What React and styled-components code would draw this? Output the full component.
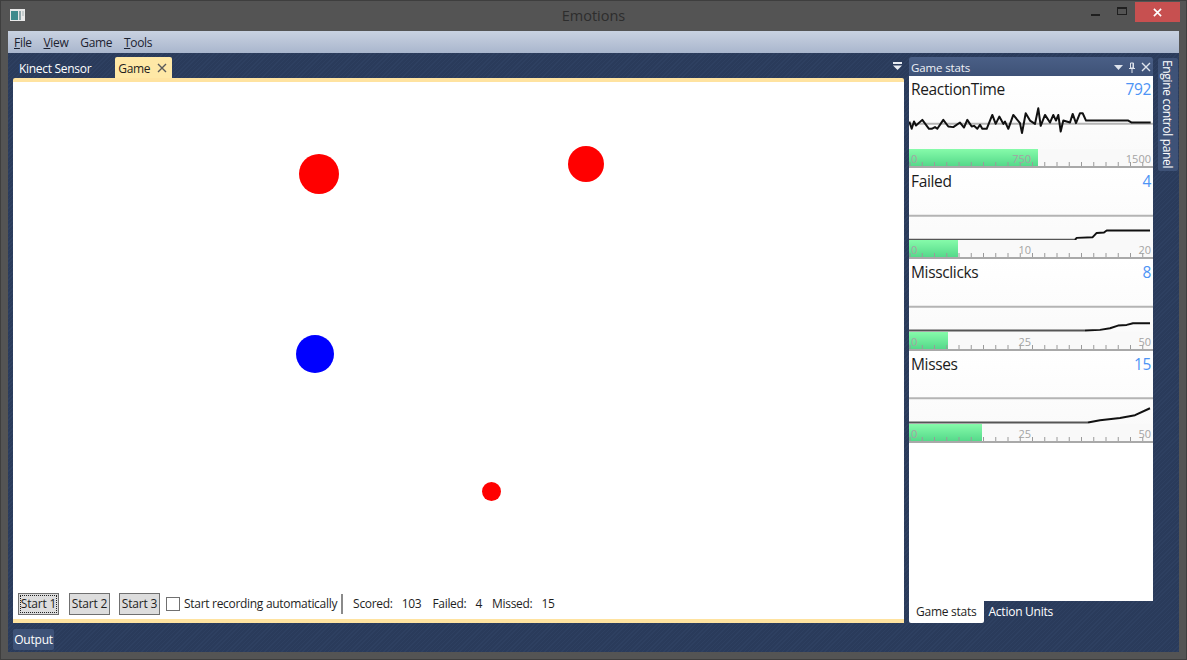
import React from 'react'
import styled, { createGlobalStyle } from 'styled-components'

const UI_FONT = `"Open Sans", "Noto Sans", sans-serif`

const GlobalStyle = createGlobalStyle`
  html, body { margin: 0; padding: 0; background: #545454; }
  body { font-family: ${UI_FONT}; font-size: 12px; color: #1e1e1e; }
  * { box-sizing: border-box; }
`

const Win = styled.div`
  width: 1187px;
  height: 660px;
  display: flex;
  flex-direction: column;
  background: #545454;
  border: 1px solid #3e3e3e;
  overflow: hidden;
`

const TitleBar = styled.header`
  height: 30px;
  flex: none;
  position: relative;
  display: flex;
  align-items: flex-start;
  justify-content: center;
`

const AppIcon = styled.svg`
  position: absolute;
  left: 9px;
  top: 8px;
`

const WinTitle = styled.div`
  font-size: 14.5px;
  line-height: 30px;
  color: #2d2d2d;
`

const WinButtons = styled.div`
  position: absolute;
  top: 1px;
  right: 6px;
  display: flex;
  align-items: flex-start;
`

const WinButton = styled.div`
  width: ${p => p.$w}px;
  height: 20px;
  display: flex;
  align-items: center;
  justify-content: center;
  padding-bottom: ${p => p.$lift || 0}px;
  background: ${p => p.$danger ? '#c75050' : 'transparent'};
`

const Client = styled.div`
  flex: 1;
  margin: 0 7px 7px;
  display: flex;
  flex-direction: column;
  min-height: 0;
  background-color: #2b3c5c;
  background-image: repeating-linear-gradient(135deg, #2a3b5b 0 2px, #2e4061 2px 3px);
`

const MenuBar = styled.nav`
  height: 22px;
  flex: none;
  display: flex;
  align-items: center;
  gap: 11.7px;
  padding-left: 6px;
  background: linear-gradient(#c9d2e1, #a9b6cd);
`

const MenuItem = styled.span`
  font-size: 12px;
  color: #1c2230;
  letter-spacing: -0.3px;
`

const Workspace = styled.div`
  flex: 1;
  min-height: 0;
  display: flex;
  padding: 4px 0 0 5px;
  gap: 5px;
`

const DocPane = styled.section`
  width: 891px;
  flex: none;
  display: flex;
  flex-direction: column;
`

const TabStrip = styled.div`
  height: 21px;
  flex: none;
  display: flex;
  align-items: stretch;
  position: relative;
`

const DocTab = styled.div`
  display: flex;
  align-items: center;
  gap: 7px;
  padding: 1px ${p => p.$active ? '5px' : '6px'} 0 ${p => p.$active ? '3px' : '6px'};
  margin-right: ${p => p.$active ? 0 : '18px'};
  border-radius: 2px 2px 0 0;
  font-size: 12px;
  letter-spacing: -0.3px;
  color: ${p => p.$active ? '#1e1e1e' : '#fff'};
  background: ${p => p.$active ? '#ffe8a6' : 'transparent'};
`

const OverflowIcon = styled.svg`
  position: absolute;
  right: 2px;
  top: 5px;
`

const DocBody = styled.div`
  flex: 1;
  display: flex;
  flex-direction: column;
  background: #fff;
  border-top: 4px solid #ffe3a0;
  border-bottom: 4px solid #ffe3a0;
  border-radius: 2px 2px 0 0;
`

const GameCanvas = styled.div`
  flex: 1;
  position: relative;
`

const Ball = styled.div`
  position: absolute;
  left: ${p => p.$x - p.$size / 2}px;
  top: ${p => p.$y - p.$size / 2}px;
  width: ${p => p.$size}px;
  height: ${p => p.$size}px;
  border-radius: 50%;
  background: ${p => p.$color};
`

const Toolbar = styled.div`
  height: 26px;
  flex: none;
  display: flex;
  align-items: center;
  padding: 0 0 5px 5px;
  font-size: 12px;
  letter-spacing: -0.3px;
`

const StartButton = styled.button`
  width: 41px;
  height: 22px;
  margin-right: ${p => p.$gap}px;
  padding: 0;
  font: inherit;
  color: #1e1e1e;
  letter-spacing: -0.2px;
  background: #dddddd;
  border: 1px solid #707070;
  outline: ${p => p.$focused ? '1px dotted #222' : 'none'};
  outline-offset: -3px;
`

const CheckBox = styled.span`
  width: 14px;
  height: 14px;
  margin-right: 4px;
  background: #fff;
  border: 1px solid #707070;
`

const Separator = styled.span`
  width: 2px;
  height: 20px;
  margin: 0 10px 0 4px;
  background: #8a8a8a;
`

const Stat = styled.span`
  margin-right: ${p => p.$gap}px;
  white-space: nowrap;
`

const SidePane = styled.aside`
  width: 244px;
  flex: none;
  display: flex;
  flex-direction: column;
  height: 566px;
`

const PaneHeader = styled.div`
  height: 19px;
  flex: none;
  display: flex;
  align-items: center;
  justify-content: space-between;
  padding: 1px 2px 0 2px;
  border-radius: 3px 3px 0 0;
  background: linear-gradient(#4a5f86, #3e5277);
  color: #eef1f6;
  font-size: 11.5px;
  letter-spacing: -0.13px;
`

const HeaderIcons = styled.div`
  display: flex;
  align-items: center;
  gap: 5px;
`

const StatsList = styled.div`
  flex: 1;
  background: #fff;
`

const StatRow = styled.div`
  height: 91.67px;
  display: flex;
  flex-direction: column;
  background: linear-gradient(#ffffff, #f9f9f9);
`

const StatHead = styled.div`
  height: 27px;
  flex: none;
  display: flex;
  justify-content: space-between;
  padding: 2px 2px 0 2px;
  font-size: 15.5px;
  line-height: 22px;
  letter-spacing: -0.35px;
  color: #1b1b1b;
`

const StatValue = styled.span`
  color: #4d94f5;
`

const Plot = styled.svg`
  flex: 1;
  display: block;
  width: 244px;
  min-height: 0;
`

const Gauge = styled.div`
  height: 19px;
  flex: none;
  position: relative;
  background: #f9f9f9;
  border-bottom: 2px solid #a9a9a9;
`

const GaugeFill = styled.div`
  height: 100%;
  background: linear-gradient(#86fbaa, #55d98a);
`

const GaugeTicks = styled.svg`
  position: absolute;
  left: 0;
  bottom: 0;
`

const GaugeLabels = styled.div`
  position: absolute;
  inset: 2px 2px 0 2px;
  display: grid;
  grid-template-columns: 1fr 1fr;
  font-size: 11px;
  line-height: 15px;
  color: #a3a3a3;
`

const GaugeHalf = styled.div`
  display: flex;
  justify-content: space-between;
`

const GaugeEnd = styled.div`
  text-align: right;
`

const PaneTabs = styled.div`
  height: 22px;
  flex: none;
  display: flex;
  font-size: 12px;
  letter-spacing: -0.25px;
`

const PaneTab = styled.div`
  display: flex;
  align-items: center;
  padding: 0 ${p => p.$active ? '7px' : '5px'} 2px;
  border-radius: 0 0 2px 2px;
  color: ${p => p.$active ? '#1e1e1e' : '#fff'};
  background: ${p => p.$active ? '#fff' : 'transparent'};
`

const SideRail = styled.div`
  flex: none;
  padding-top: 1px;
`

const RailTab = styled.div`
  width: 20px;
  height: 113px;
  writing-mode: vertical-rl;
  white-space: nowrap;
  display: flex;
  align-items: center;
  padding: 2px 2px 0 0;
  border-radius: 2px;
  background: #3e5277;
  color: #fff;
  font-size: 12px;
  letter-spacing: -0.33px;
`

const BottomStrip = styled.div`
  height: 29px;
  flex: none;
  padding: 6px 0 2px 5px;
`

const OutputTab = styled.div`
  width: 41px;
  height: 21px;
  display: flex;
  align-items: center;
  justify-content: center;
  border-radius: 2px;
  background: #3e5277;
  color: #fff;
  font-size: 12px;
  letter-spacing: -0.2px;
`

const toPolyline = (pts, top) => pts.map(([x, y]) => `${x - 909},${y - top}`).join(' ')

const reactionLine = [
  [909.3, 121.7], [911.7, 129], [914, 121.7], [916, 125.7], [922.3, 120], [929, 129], [931.7, 129],
  [935, 127.3], [937.3, 129], [943.3, 120], [948.3, 126.7], [953.3, 127.3], [960, 122.7], [964, 127.7],
  [967.3, 120], [971.7, 126.7], [974, 126], [977.3, 129], [980, 125], [982.3, 129], [986.7, 129],
  [992.3, 115], [995.7, 124], [999.3, 116.7], [1003.3, 124], [1005, 121.7], [1008.3, 129], [1013.3, 115],
  [1020, 123.3], [1022, 133.3], [1025.7, 113.3], [1030, 120.7], [1035, 124], [1038.3, 108.3], [1040.7, 126],
  [1045, 115], [1050, 122.7], [1053.3, 115], [1056, 120.7], [1058.3, 115], [1060.7, 131.7], [1063.3, 120.7],
  [1070, 122.7], [1072.7, 114], [1076, 123.3], [1080, 113.3], [1082.7, 113.3], [1086, 120.7], [1128.3, 120.7],
  [1131.7, 122.7], [1150.7, 122.7],
]

// screen y of each plot's top is kept in `top`, so the traced points stay readable
const rows = [
  {
    title: 'ReactionTime', value: '792', top: 103, guide: 21, fill: 129,
    labels: ['0', '750', '1500'], line: reactionLine,
  },
  {
    title: 'Failed', value: '4', top: 194.5, guide: 21, fill: 49, flat: [239.7, 1075],
    labels: ['0', '10', '20'],
    line: [[1075, 239.7], [1076.7, 237.7], [1092.7, 237], [1096.7, 232.7], [1104, 232.3], [1106.7, 230.3], [1150, 230.3]],
  },
  {
    title: 'Missclicks', value: '8', top: 285.8, guide: 21, fill: 39, flat: [330.7, 1085],
    labels: ['0', '25', '50'],
    line: [[1085, 330.7], [1100, 330], [1110, 328.3], [1118, 325.7], [1126.7, 325], [1133, 323.3], [1150, 323.3]],
  },
  {
    title: 'Misses', value: '15', top: 377.5, guide: 20.5, fill: 73, flat: [422.3, 1088],
    labels: ['0', '25', '50'],
    line: [[1088, 422.3], [1100, 420], [1120, 417.7], [1135, 415], [1150, 408]],
  },
]

const ticks = Array.from({ length: 20 }, (_, i) => 1 + i * 12.25)

const StatBlock = ({ row }) => (
  <StatRow>
    <StatHead>
      <span>{row.title}</span>
      <StatValue>{row.value}</StatValue>
    </StatHead>
    <Plot viewBox="0 0 244 46" preserveAspectRatio="none">
      <line x1="0" x2="244" y1={row.guide} y2={row.guide} stroke="#b4b4b4" strokeWidth="2" />
      {row.flat && (
        <line x1="0" x2={row.flat[1] - 909} y1={row.flat[0] - row.top} y2={row.flat[0] - row.top} stroke="#555" strokeWidth="2" />
      )}
      <polyline points={toPolyline(row.line, row.top)} fill="none" stroke="#111" strokeWidth="2" strokeLinejoin="round" />
    </Plot>
    <Gauge>
      <GaugeFill style={{ width: row.fill }} />
      <GaugeTicks width="244" height="5">
        {ticks.map(x => <line key={x} x1={x} x2={x} y1="1" y2="5" stroke="#9a9a9a" />)}
      </GaugeTicks>
      <GaugeLabels>
        <GaugeHalf>
          <span>{row.labels[0]}</span>
          <span>{row.labels[1]}</span>
        </GaugeHalf>
        <GaugeEnd>{row.labels[2]}</GaugeEnd>
      </GaugeLabels>
    </Gauge>
  </StatRow>
)

const CloseGlyph = ({ size, color, width = 1.4 }) => (
  <svg width={size} height={size} viewBox="0 0 10 10">
    <path d="M1 1 9 9M9 1 1 9" stroke={color} strokeWidth={width} fill="none" />
  </svg>
)

export default function App() {
  return (
    <>
      <GlobalStyle />
      <Win>
        <TitleBar>
          <AppIcon width="15" height="12" viewBox="0 0 15 12">
            <rect width="15" height="12" fill="#e8e8e8" />
            <rect x="1" y="2" width="7" height="9" fill="#3f8a8c" />
            <rect x="9" y="2" width="2" height="9" fill="#8fa4a8" />
            <rect x="12" y="2" width="2" height="5" fill="#c4cccc" />
          </AppIcon>
          <WinTitle>Emotions</WinTitle>
          <WinButtons>
            <WinButton $w={28}>
              <svg width="9" height="10" viewBox="0 0 9 10"><rect y="7" width="9" height="2" fill="#1f1f1f" /></svg>
            </WinButton>
            <WinButton $w={26} $lift={3}>
              <svg width="10" height="8" viewBox="0 0 10 8">
                <rect x="0.5" y="0.5" width="9" height="7" fill="none" stroke="#1f1f1f" />
                <rect x="0" y="0" width="10" height="2" fill="#1f1f1f" />
              </svg>
            </WinButton>
            <WinButton $w={45} $danger>
              <CloseGlyph size={9} color="#fff" width={1.8} />
            </WinButton>
          </WinButtons>
        </TitleBar>
        <Client>
          <MenuBar>
            <MenuItem><u>F</u>ile</MenuItem>
            <MenuItem><u>V</u>iew</MenuItem>
            <MenuItem>Game</MenuItem>
            <MenuItem><u>T</u>ools</MenuItem>
          </MenuBar>
          <Workspace>
            <DocPane>
              <TabStrip>
                <DocTab>Kinect Sensor</DocTab>
                <DocTab $active>
                  Game
                  <CloseGlyph size={10} color="#5a5a5a" />
                </DocTab>
                <OverflowIcon width="9" height="9" viewBox="0 0 9 9">
                  <rect width="9" height="2" fill="#e8ecf2" />
                  <path d="M0 3.5h9L4.5 8z" fill="#e8ecf2" />
                </OverflowIcon>
              </TabStrip>
              <DocBody>
                <GameCanvas>
                  <Ball $x={306} $y={92} $size={40} $color="#ff0000" />
                  <Ball $x={573} $y={82} $size={36} $color="#ff0000" />
                  <Ball $x={302} $y={272} $size={38} $color="#0000ff" />
                  <Ball $x={478} $y={409} $size={19} $color="#ff0000" />
                </GameCanvas>
                <Toolbar>
                  <StartButton $gap={10} $focused>Start 1</StartButton>
                  <StartButton $gap={9}>Start 2</StartButton>
                  <StartButton $gap={6}>Start 3</StartButton>
                  <CheckBox />
                  <span>Start recording automatically</span>
                  <Separator />
                  <Stat $gap={9}>Scored:</Stat>
                  <Stat $gap={11}>103</Stat>
                  <Stat $gap={9}>Failed:</Stat>
                  <Stat $gap={10}>4</Stat>
                  <Stat $gap={9}>Missed:</Stat>
                  <Stat $gap={0}>15</Stat>
                </Toolbar>
              </DocBody>
            </DocPane>
            <SidePane>
              <PaneHeader>
                <span>Game stats</span>
                <HeaderIcons>
                  <svg width="9" height="5" viewBox="0 0 9 5"><path d="M0 0h9L4.5 5z" fill="#dfe4ec" /></svg>
                  <svg width="8" height="11" viewBox="0 0 8 11">
                    <path d="M2.5 1h3v5h-3zM1 6.500h6M4 7v4M5 1v5" stroke="#dfe4ec" fill="none" />
                  </svg>
                  <CloseGlyph size={10} color="#dfe4ec" />
                </HeaderIcons>
              </PaneHeader>
              <StatsList>
                {rows.map(row => <StatBlock key={row.title} row={row} />)}
              </StatsList>
              <PaneTabs>
                <PaneTab $active>Game stats</PaneTab>
                <PaneTab>Action Units</PaneTab>
              </PaneTabs>
            </SidePane>
            <SideRail>
              <RailTab>Engine control panel</RailTab>
            </SideRail>
          </Workspace>
          <BottomStrip>
            <OutputTab>Output</OutputTab>
          </BottomStrip>
        </Client>
      </Win>
    </>
  )
}
